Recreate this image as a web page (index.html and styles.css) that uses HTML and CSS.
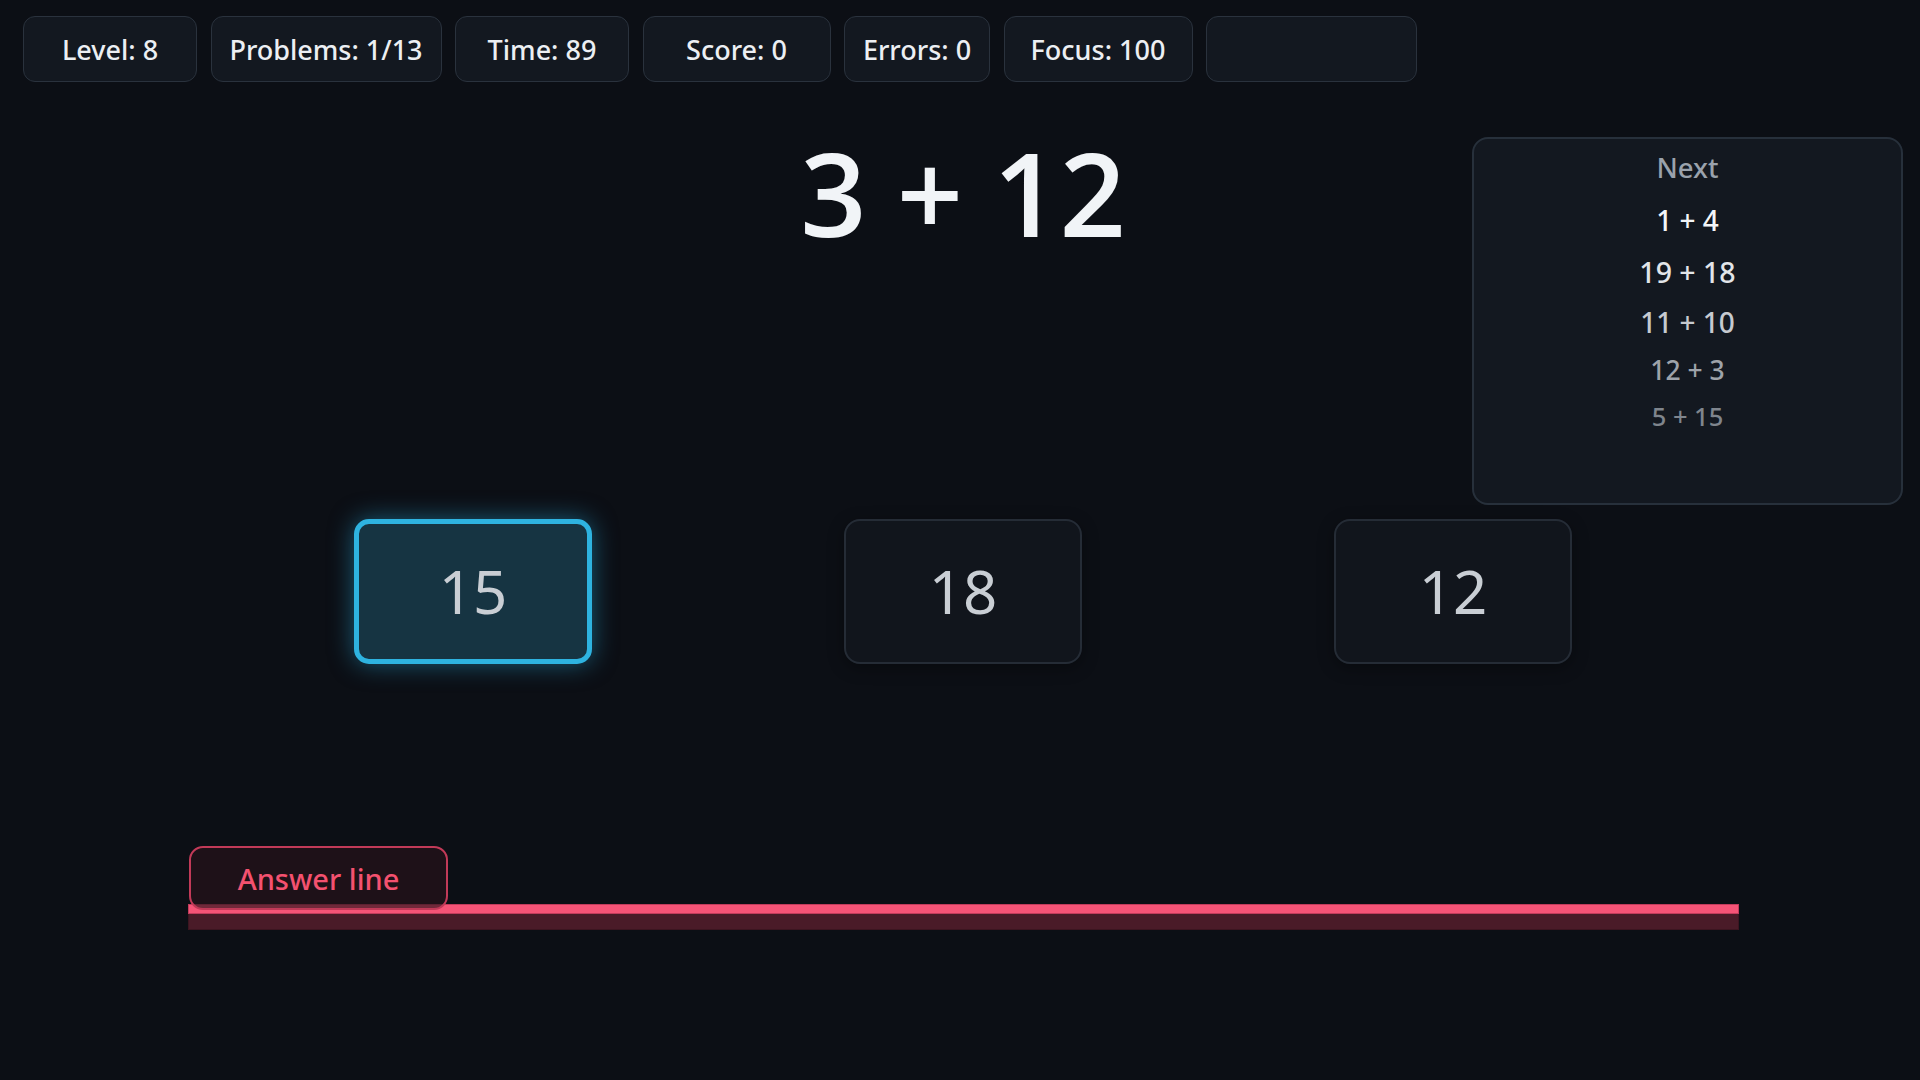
FILE: index.html
```html
<!DOCTYPE html>
<html lang="en">
<head>
<meta charset="utf-8">
<title>Math Drop</title>
<link rel="stylesheet" href="styles.css">
</head>
<body>
<header class="topbar">
  <div class="stat stat-level">Level: 8</div>
  <div class="stat stat-problems">Problems: 1/13</div>
  <div class="stat stat-time">Time: 89</div>
  <div class="stat stat-score">Score: 0</div>
  <div class="stat stat-errors">Errors: 0</div>
  <div class="stat stat-focus">Focus: 100</div>
  <div class="stat stat-empty"></div>
</header>

<main class="stage">
  <div class="problem">3 + 12</div>
  <aside class="next-panel">
    <div class="next-title">Next</div>
    <div class="next-item n1">1 + 4</div>
    <div class="next-item n2">19 + 18</div>
    <div class="next-item n3">11 + 10</div>
    <div class="next-item n4">12 + 3</div>
    <div class="next-item n5">5 + 15</div>
  </aside>
</main>

<section class="choices">
  <div class="choice selected">15</div>
  <div class="choice">18</div>
  <div class="choice">12</div>
</section>

<section class="answer">
  <div class="answer-label">Answer line</div>
  <div class="answer-line">
    <div class="line-bar"></div>
    <div class="line-band"></div>
  </div>
</section>
</body>
</html>
```

FILE: styles.css
```css
* { box-sizing: border-box; }

html, body {
  margin: 0;
  padding: 0;
}

body {
  width: 1920px;
  height: 1080px;
  overflow: hidden;
  background: #0c0f15;
  color: #e8ecf0;
  font-family: "Noto Sans", "Open Sans", sans-serif;
}

.topbar {
  display: flex;
  gap: 13.5px;
  padding: 16px 23px 0;
}

.stat {
  height: 66px;
  display: flex;
  align-items: center;
  justify-content: center;
  background: #131820;
  border: 1px solid #2a323d;
  border-radius: 12px;
  font-size: 27px;
  font-weight: 500;
  color: #eceff3;
  white-space: nowrap;
}

.stat-level { width: 174px; }
.stat-problems { width: 231px; }
.stat-time { width: 174px; }
.stat-score { width: 188px; }
.stat-errors { width: 146px; }
.stat-focus { width: 189px; }
.stat-empty { width: 211px; }

.stage {
  display: grid;
  grid-template-columns: 1fr auto 1fr;
  align-items: start;
  padding-top: 52px;
}

.problem {
  grid-column: 2;
  font-family: "Open Sans", "Noto Sans", sans-serif;
  font-size: 116px;
  line-height: 1;
  font-weight: 600;
  color: #f1f4f7;
  white-space: nowrap;
  padding-left: 6px;
}

.next-panel {
  grid-column: 3;
  justify-self: end;
  margin: 3px 17px 0 0;
  width: 431px;
  height: 368px;
  background: #131820;
  border: 2px solid #27303b;
  border-radius: 16px;
  padding-top: 9px;
  display: flex;
  flex-direction: column;
  align-items: center;
}

.next-title {
  font-size: 27.5px;
  line-height: 40px;
  font-weight: 500;
  color: #9aa2ac;
  margin-bottom: 7px;
}

.next-item {
  font-weight: 500;
}

.n1 { font-size: 28px; line-height: 50.5px; color: #f3f5f8; }
.n2 { font-size: 28.5px; line-height: 52.5px; color: #e2e5e9; }
.n3 { font-size: 28px; line-height: 48.5px; color: #c6cad0; }
.n4 { font-size: 26.5px; line-height: 46.5px; color: #9ea3aa; }
.n5 { font-size: 25.5px; line-height: 46px; color: #7f858d; }

.choices {
  display: flex;
  justify-content: center;
  gap: 252px;
  margin-top: 14px;
  padding-left: 6px;
}

.choice {
  width: 238px;
  height: 145px;
  display: flex;
  align-items: center;
  justify-content: center;
  background: #11151c;
  border: 2px solid #252c36;
  border-radius: 16px;
  box-shadow: 0 4px 16px rgba(0, 0, 0, 0.35);
  font-size: 60px;
  font-weight: 400;
  color: #c9ced4;
  padding-bottom: 2px;
}

.choice.selected {
  background: #163442;
  border: 5px solid #2eb3e0;
  border-radius: 15px;
  box-shadow: 0 0 24px rgba(40, 170, 220, 0.5);
}

.answer {
  margin: 182px 181px 0 188px;
}

.answer-label {
  position: relative;
  z-index: 1;
  width: 259px;
  height: 64px;
  margin-left: 1px;
  margin-bottom: -6px;
  display: flex;
  align-items: center;
  justify-content: center;
  background: rgba(40, 18, 26, 0.65);
  border: 2px solid #c23a58;
  border-radius: 14px;
  font-size: 29px;
  font-weight: 500;
  color: #f4516f;
}

.line-bar {
  height: 10px;
  background: #f65477;
  border: 1px solid #c23c5c;
}

.line-band {
  height: 16px;
  background: #4a1b28;
  border: 1px solid #3c1520;
  border-top: none;
}
```
